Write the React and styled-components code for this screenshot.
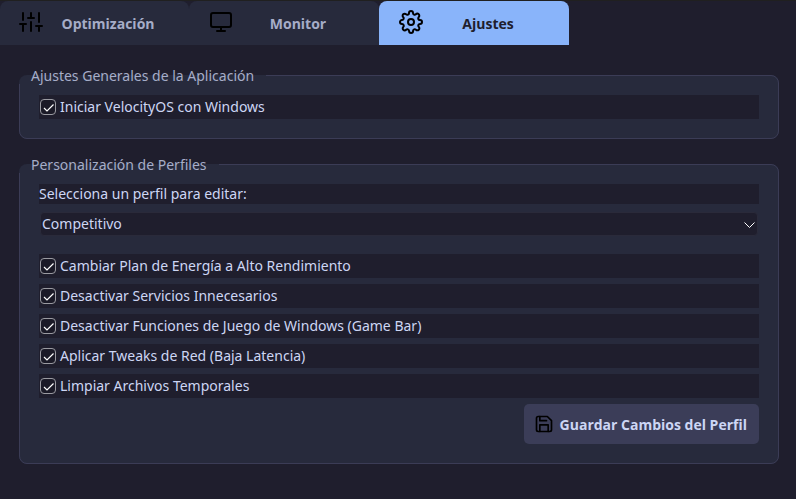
import React, { useState } from "react";
import styled, { createGlobalStyle } from "styled-components";
import { FiMonitor, FiSave, FiSettings, FiSliders } from "react-icons/fi";

const color = {
  base: "#1f1e2d",
  panel: "#272a3c",
  border: "#3b3c56",
  button: "#3b3d58",
  text: "#cdd6f4",
  muted: "#a6adc8",
  accent: "#89b4fa",
  ink: "#000000",
};

const GlobalStyle = createGlobalStyle`
  *, *::before, *::after { box-sizing: border-box; }
  body {
    margin: 0;
    background: ${color.base};
    color: ${color.text};
    font: 14px/20px "Noto Sans", "Open Sans", sans-serif;
  }
  button, input, select { font: inherit; color: inherit; margin: 0; }
  button { font-family: "Open Sans", "Noto Sans", sans-serif; }
`;

const TabBar = styled.nav`
  display: flex;
  border-top: 1px solid #202020;
`;

const Tab = styled.button`
  display: flex;
  align-items: center;
  gap: 4px;
  width: 190px;
  height: 44px;
  padding: 0 20px;
  border: 0;
  border-radius: 8px 8px 0 0;
  background: ${(p) => (p.$active ? color.accent : color.panel)};
  color: ${(p) => (p.$active ? color.base : color.muted)};
  font-weight: 700;

  &:first-child {
    width: 189px;
    padding-left: 19px;
  }

  svg {
    flex: none;
    color: ${color.ink};
  }
`;

const TabIcon = styled.span`
  display: flex;
  padding-bottom: 2px;
`;

const TabLabel = styled.span`
  flex: 1;
  padding-top: 2px;
  text-align: center;
`;

const Page = styled.main`
  display: flex;
  flex-direction: column;
  gap: 17px;
  padding: 22px 17px 32px 19px;
`;

const Group = styled.fieldset`
  min-width: 0;
  margin: 0;
  padding: 11px 19px 19px;
  border: 1px solid ${color.border};
  border-radius: 8px;
  background: ${color.panel};
`;

const GroupTitle = styled.legend`
  margin-left: -20px;
  padding: 0 12px;
  line-height: 17px;
  color: ${color.muted};
`;

const Fields = styled.div`
  display: flex;
  flex-direction: column;
  gap: 6px;
`;

const CheckRow = styled.label`
  display: flex;
  align-items: center;
  gap: 4px;
  height: 24px;
  padding-left: 1px;
  background: ${color.base};
`;

const CheckMark = styled.span`
  display: grid;
  place-items: center;

  > * {
    grid-area: 1 / 1;
  }

  svg {
    pointer-events: none;
  }
`;

const CheckBox = styled.input`
  appearance: none;
  width: 16px;
  height: 16px;
  border: 1px solid #9a9aa1;
  border-radius: 4px;
  background: #1b1a27;

  &:not(:checked) + svg {
    visibility: hidden;
  }
`;

const FieldLabel = styled.label`
  display: block;
  background: ${color.base};
`;

const SelectBox = styled.div`
  display: grid;
  align-items: center;
  margin: 8px 1px 18px;

  > * {
    grid-area: 1 / 1;
  }

  svg {
    justify-self: end;
    margin: 2px 3px 0 0;
    pointer-events: none;
  }
`;

const Select = styled.select`
  appearance: none;
  width: 100%;
  height: 24px;
  padding: 0 20px 0 1px;
  border: 1px solid #2a2a3a;
  border-radius: 4px;
  background: ${color.base};
`;

const Actions = styled.div`
  display: flex;
  justify-content: flex-end;
`;

const SaveButton = styled.button`
  display: flex;
  align-items: center;
  gap: 6px;
  height: 40px;
  padding: 0 12px 0 10px;
  border: 0;
  border-radius: 5px;
  background: ${color.button};
  font-weight: 700;

  svg {
    color: ${color.ink};
  }
`;

const SaveLabel = styled.span`
  padding-top: 2px;
`;

const tabs = [
  { name: "Optimización", Icon: FiSliders },
  { name: "Monitor", Icon: FiMonitor },
  { name: "Ajustes", Icon: FiSettings },
];

const profileOptions = [
  "Cambiar Plan de Energía a Alto Rendimiento",
  "Desactivar Servicios Innecesarios",
  "Desactivar Funciones de Juego de Windows (Game Bar)",
  "Aplicar Tweaks de Red (Baja Latencia)",
  "Limpiar Archivos Temporales",
];

function Check({ children }) {
  return (
    <CheckRow>
      <CheckMark>
        <CheckBox type="checkbox" defaultChecked />
        <svg width="16" height="16" viewBox="0 0 16 16" fill="none" stroke="#fff" strokeWidth="1.2">
          <path d="M4 9 7 12 13.5 5.5" />
        </svg>
      </CheckMark>
      {children}
    </CheckRow>
  );
}

export default function App() {
  const [active, setActive] = useState("Ajustes");

  return (
    <>
      <GlobalStyle />
      <TabBar>
        {tabs.map(({ name, Icon }) => (
          <Tab key={name} type="button" $active={name === active} onClick={() => setActive(name)}>
            <TabIcon>
              <Icon size={24} />
            </TabIcon>
            <TabLabel>{name}</TabLabel>
          </Tab>
        ))}
      </TabBar>
      <Page>
        <Group>
          <GroupTitle>Ajustes Generales de la Aplicación</GroupTitle>
          <Check>Iniciar VelocityOS con Windows</Check>
        </Group>
        <Group>
          <GroupTitle>Personalización de Perfiles</GroupTitle>
          <FieldLabel htmlFor="profile">Selecciona un perfil para editar:</FieldLabel>
          <SelectBox>
            <Select id="profile">
              <option>Competitivo</option>
            </Select>
            <svg width="11" height="6" viewBox="0 0 11 6" fill="none" stroke="#fff" strokeWidth="1">
              <path d="M0.5 0.5 5.5 5.5 10.5 0.5" />
            </svg>
          </SelectBox>
          <Fields>
            {profileOptions.map((option) => (
              <Check key={option}>{option}</Check>
            ))}
            <Actions>
              <SaveButton type="button">
                <FiSave size={20} />
                <SaveLabel>Guardar Cambios del Perfil</SaveLabel>
              </SaveButton>
            </Actions>
          </Fields>
        </Group>
      </Page>
    </>
  );
}
